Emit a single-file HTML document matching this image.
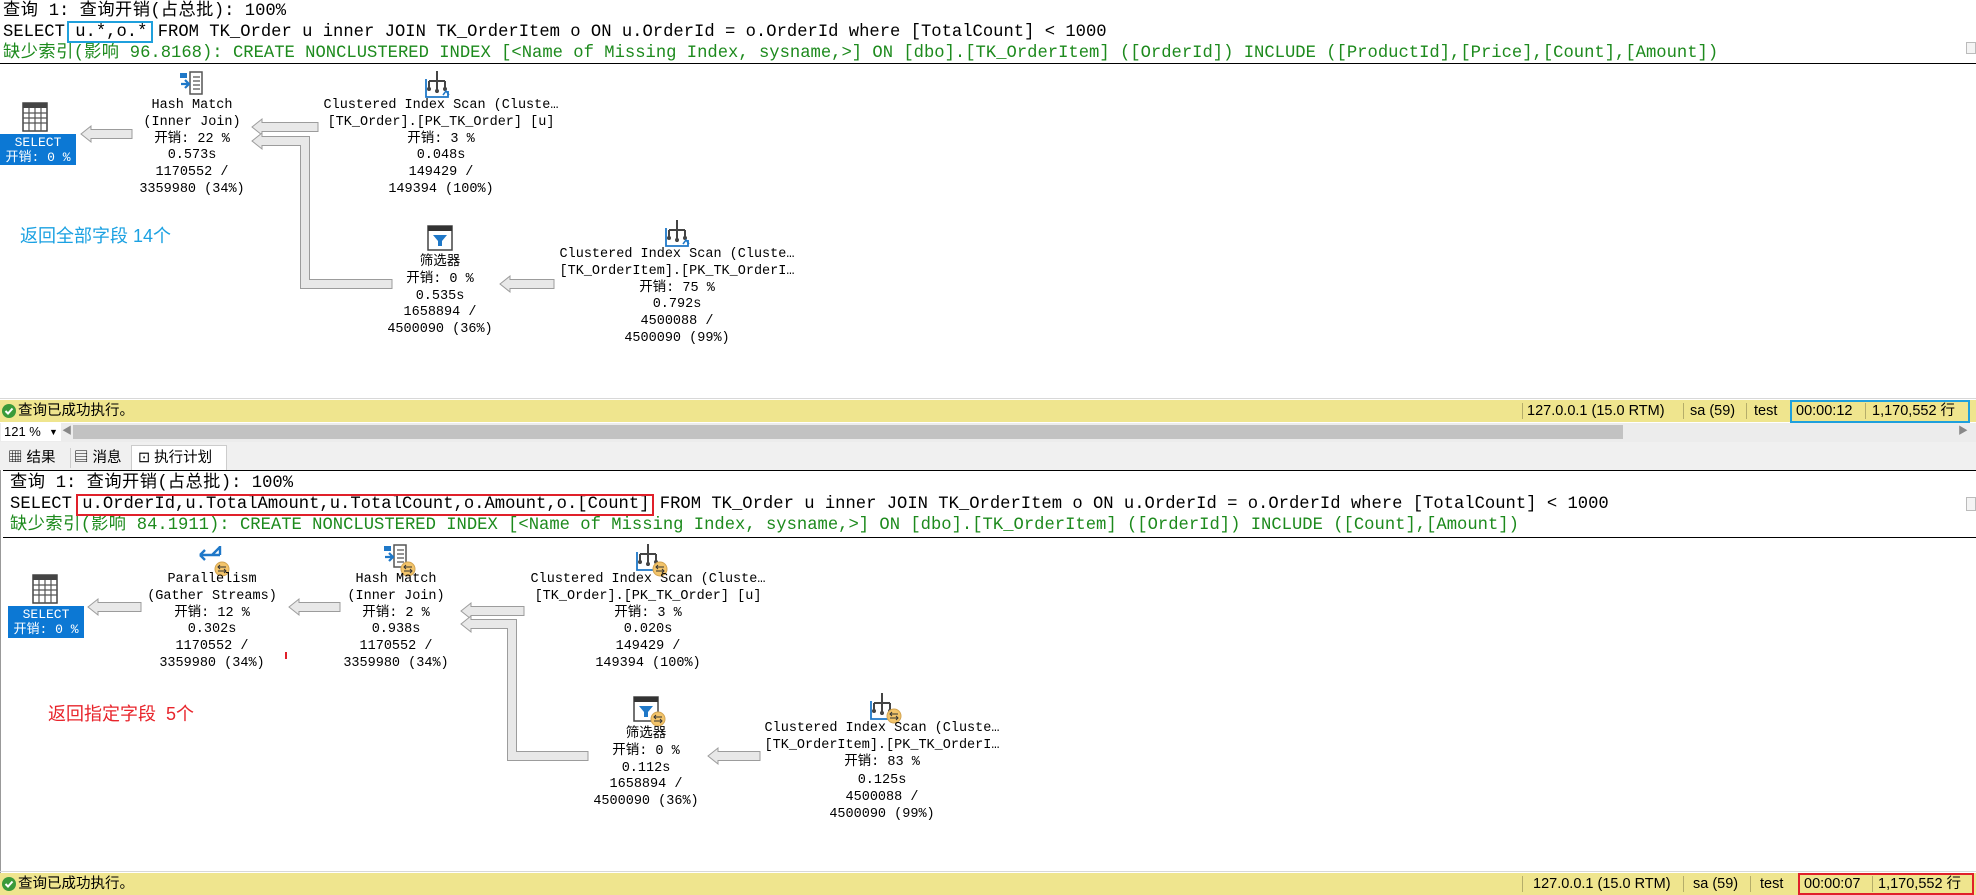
<!DOCTYPE html>
<html><head><meta charset="utf-8"><style>
*{margin:0;padding:0;box-sizing:border-box}
body{width:1976px;height:895px;position:relative;overflow:hidden;background:#fff;font-family:"Liberation Mono","Noto Sans CJK SC",monospace;color:#000}
.a{position:absolute;white-space:pre}
.q{font-size:17.2px;line-height:21px;font-family:"Liberation Mono","Noto Sans CJK SC",monospace}
.c{letter-spacing:0.5px}
.g{color:#1d8a1d}
.n{position:absolute;width:300px;text-align:center;font-size:13.5px;line-height:16.8px;white-space:pre;font-family:"Liberation Mono","Noto Sans CJK SC",monospace}
.sel{position:absolute;background:#0c78d4;color:#fff;text-align:center;font-size:13px;line-height:15px;padding-top:1px}
.sb{position:absolute;left:0;width:1976px;height:22px;background:#efe58e;font-family:"Liberation Sans","Noto Sans CJK SC",sans-serif;font-size:14.5px;line-height:22px}
.sb span{position:absolute;top:0}
.sep{position:absolute;top:3px;width:1px;height:16px;background:#b5ad6a}
.sans{font-family:"Liberation Sans","Noto Sans CJK SC",sans-serif}
</style></head><body>

<div class="a q" style="left:3px;top:1px"><span class="c">查询</span> 1: <span class="c">查询开销</span>(<span class="c">占总批</span>): 100%
SELECT u.*,o.* FROM TK_Order u inner JOIN TK_OrderItem o ON u.OrderId = o.OrderId where [TotalCount] &lt; 1000
<span class="g"><span class="c">缺少索引</span>(<span class="c">影响</span> 96.8168): CREATE NONCLUSTERED INDEX [&lt;Name of Missing Index, sysname,&gt;] ON [dbo].[TK_OrderItem] ([OrderId]) INCLUDE ([ProductId],[Price],[Count],[Amount])</span></div>
<div class="a" style="left:67px;top:21px;width:86px;height:22px;border:2px solid #1fa0dc"></div>
<div class="a" style="left:0;top:63px;width:1976px;height:1px;background:#000"></div>
<div class="a" style="left:1966px;top:42px;width:10px;height:12px;border:1px solid #bbb;background:#f4f4f4"></div>

<svg class="a" style="left:0;top:0" width="1976" height="895">
<defs>
<g id="grid"><rect x="0" y="0" width="24" height="28" fill="#fff" stroke="#444" stroke-width="1.5"/><rect x="0" y="0" width="24" height="5" fill="#444"/><path d="M0 10H24M0 15H24M0 20H24M6 5V28M12 5V28M18 5V28" stroke="#555" stroke-width="1.2"/></g>
<g id="hash"><rect x="10" y="1" width="12" height="22" fill="#fff" stroke="#555" stroke-width="1.5"/><path d="M13 6H20M13 10H20M13 14H20M13 18H20" stroke="#555" stroke-width="1.2"/><rect x="0" y="2" width="7" height="5" fill="#1f78c8"/><path d="M1 13H9M5 9L9 13L5 17" stroke="#1f78c8" stroke-width="2.2" fill="none"/></g>
<g id="cis"><path d="M12 0V22M4 10V17M20 10V17M4 10H20" stroke="#444" stroke-width="2" fill="none"/><circle cx="4" cy="18" r="2" fill="#444"/><circle cx="12" cy="20" r="2" fill="#444"/><circle cx="20" cy="18" r="2" fill="#444"/><path d="M1 8V26H23V20" stroke="#1f78c8" stroke-width="1.8" fill="none"/><path d="M18 24L21 20L24 24" stroke="#1f78c8" stroke-width="1.5" fill="none"/></g>
<g id="filt"><rect x="0" y="0" width="24" height="24" fill="#fff" stroke="#444" stroke-width="1.5"/><rect x="0" y="0" width="24" height="5" fill="#333"/><path d="M5 9H19L14 15V20H10V15Z" fill="#1f78c8"/></g>
<g id="par"><path d="M2 11H22M2 11L7 6M2 11L7 16M22 11V2M14 11L22 3" stroke="#1f78c8" stroke-width="2.4" fill="none"/></g>
<g id="bdg"><circle cx="0" cy="0" r="7" fill="#f3c46a" stroke="#d2a452"/><path d="M-4 -2H4M-4 2H4M-2 -4L-4 -2L-2 0M2 0L4 2L2 4" stroke="#333" stroke-width="1" fill="none"/></g>
</defs>
<g fill="#e8e8e8" stroke="#9c9c9c" stroke-width="1">
<polygon points="81,134 91,126 91,129.5 132,129.5 132,138.5 91,138.5 91,142"/>
<polygon points="252,127 262,119 262,122.5 318,122.5 318,131.5 262,131.5 262,135"/>
<polygon points="252,141 262,133 262,136.5 309.5,136.5 309.5,279.5 392,279.5 392,288.5 300.5,288.5 300.5,145.5 262,145.5 262,149"/>
<polygon points="500,284 510,276 510,279.5 554,279.5 554,288.5 510,288.5 510,292"/>
<polygon points="88,607 98,599 98,602.5 141,602.5 141,611.5 98,611.5 98,615"/>
<polygon points="289,607 299,599 299,602.5 340,602.5 340,611.5 299,611.5 299,615"/>
<polygon points="461,611 471,603 471,606.5 524,606.5 524,615.5 471,615.5 471,619"/>
<polygon points="461,624 471,616 471,619.5 516.5,619.5 516.5,751.5 588,751.5 588,760.5 507.5,760.5 507.5,628.5 471,628.5 471,632"/>
<polygon points="708,756 718,748 718,751.5 760,751.5 760,760.5 718,760.5 718,764"/>
</g>
<use href="#grid" x="23" y="103"/>
<use href="#hash" x="180" y="71"/>
<use href="#cis" x="425" y="71"/>
<use href="#filt" x="428" y="226"/>
<use href="#cis" x="665" y="220"/>
<use href="#grid" x="33" y="575"/>
<use href="#par" x="198" y="544"/><use href="#bdg" x="222" y="569"/>
<use href="#hash" x="384" y="544"/><use href="#bdg" x="408" y="569"/>
<use href="#cis" x="636" y="544"/><use href="#bdg" x="660" y="569"/>
<use href="#filt" x="634" y="697"/><use href="#bdg" x="658" y="719"/>
<use href="#cis" x="870" y="693"/><use href="#bdg" x="894" y="716"/>
<rect x="285" y="652" width="2" height="7" fill="#e0202a"/>
</svg>

<div class="sel" style="left:0;top:134px;width:76px;height:31px">SELECT<br>开销: 0 %</div>
<div class="n" style="left:42px;top:98px">Hash Match
(Inner Join)
开销: 22 %
0.573s
1170552 /
3359980 (34%)</div>
<div class="n" style="left:291px;top:98px">Clustered Index Scan (Cluste…
[TK_Order].[PK_TK_Order] [u]
开销: 3 %
0.048s
149429 /
149394 (100%)</div>
<div class="n" style="left:290px;top:255px">筛选器
开销: 0 %
0.535s
1658894 /
4500090 (36%)</div>
<div class="n" style="left:527px;top:247px">Clustered Index Scan (Cluste…
[TK_OrderItem].[PK_TK_OrderI…
开销: 75 %
0.792s
4500088 /
4500090 (99%)</div>
<div class="a sans" style="left:20px;top:222px;font-size:18px;color:#1ba1e2">返回全部字段 14个</div>
<div class="a" style="left:0;top:398px;width:1976px;height:1px;background:#d8d8d8"></div>

<div class="sb" style="top:400px">
<svg style="position:absolute;left:2px;top:4px" width="14" height="14"><circle cx="7" cy="7" r="7" fill="#3a9a3a"/><path d="M3.5 7L6 9.5L10.5 4.5" stroke="#fff" stroke-width="2" fill="none"/></svg>
<span style="left:18px">查询已成功执行。</span>
<div class="sep" style="left:1522px"></div><span style="left:1527px">127.0.0.1 (15.0 RTM)</span>
<div class="sep" style="left:1683px"></div><span style="left:1690px">sa (59)</span>
<div class="sep" style="left:1746px"></div><span style="left:1754px">test</span>
<div class="sep" style="left:1865px"></div>
<span style="left:1796px">00:00:12</span><span style="left:1872px">1,170,552 行</span>
</div>
<div class="a" style="left:1790px;top:400px;width:180px;height:23px;border:2px solid #1fa0dc"></div>

<div class="a" style="left:0;top:423px;width:1976px;height:19px;background:#ececec"></div>
<div class="a sans" style="left:1px;top:423px;width:60px;height:18px;background:#fff;font-size:13px;line-height:18px;padding-left:3px">121 %</div>
<div class="a sans" style="left:49px;top:423px;font-size:9px;line-height:18px">▼</div>
<div class="a sans" style="left:62px;top:423px;font-size:10px;line-height:18px;color:#888">◀</div>
<div class="a" style="left:73px;top:425px;width:1550px;height:14px;background:#c2c2c2"></div>
<div class="a sans" style="left:1958px;top:423px;font-size:10px;line-height:18px;color:#888">▶</div>

<div class="a" style="left:0;top:442px;width:1976px;height:28px;background:#f0f0f0"></div>
<div class="a sans" style="left:8px;top:448px;font-size:14.5px;line-height:20px">▦ 结果</div>
<div class="a" style="left:70px;top:448px;width:1px;height:20px;background:#ccc"></div>
<div class="a sans" style="left:74px;top:448px;font-size:14.5px;line-height:20px">▤ 消息</div>
<div class="a sans" style="left:131px;top:445px;width:96px;height:26px;background:#fff;border:1px solid #ccc;border-bottom:none;font-size:14.5px;line-height:24px;padding-left:6px">⊡ 执行计划</div>

<div class="a" style="left:3px;top:470px;width:1973px;height:1px;background:#000"></div>
<div class="a" style="left:0;top:470px;width:1px;height:404px;background:#999"></div>
<div class="a q" style="left:10px;top:473px"><span class="c">查询</span> 1: <span class="c">查询开销</span>(<span class="c">占总批</span>): 100%
SELECT u.OrderId,u.TotalAmount,u.TotalCount,o.Amount,o.[Count] FROM TK_Order u inner JOIN TK_OrderItem o ON u.OrderId = o.OrderId where [TotalCount] &lt; 1000
<span class="g"><span class="c">缺少索引</span>(<span class="c">影响</span> 84.1911): CREATE NONCLUSTERED INDEX [&lt;Name of Missing Index, sysname,&gt;] ON [dbo].[TK_OrderItem] ([OrderId]) INCLUDE ([Count],[Amount])</span></div>
<div class="a" style="left:76px;top:494px;width:578px;height:22px;border:2px solid #e0202a"></div>
<div class="a" style="left:3px;top:537px;width:1973px;height:1px;background:#000"></div>
<div class="a" style="left:1966px;top:497px;width:10px;height:14px;border:1px solid #bbb;background:#f4f4f4"></div>

<div class="sel" style="left:8px;top:606px;width:76px;height:32px">SELECT<br>开销: 0 %</div>
<div class="n" style="left:62px;top:572px">Parallelism
(Gather Streams)
开销: 12 %
0.302s
1170552 /
3359980 (34%)</div>
<div class="n" style="left:246px;top:572px">Hash Match
(Inner Join)
开销: 2 %
0.938s
1170552 /
3359980 (34%)</div>
<div class="n" style="left:498px;top:572px">Clustered Index Scan (Cluste…
[TK_Order].[PK_TK_Order] [u]
开销: 3 %
0.020s
149429 /
149394 (100%)</div>
<div class="n" style="left:496px;top:727px">筛选器
开销: 0 %
0.112s
1658894 /
4500090 (36%)</div>
<div class="n" style="left:732px;top:720px;line-height:17.2px">Clustered Index Scan (Cluste…
[TK_OrderItem].[PK_TK_OrderI…
开销: 83 %
0.125s
4500088 /
4500090 (99%)</div>
<div class="a sans" style="left:48px;top:700px;font-size:18px;color:#e8242b">返回指定字段  5个</div>
<div class="a" style="left:0;top:871px;width:1976px;height:1px;background:#d8d8d8"></div>

<div class="sb" style="top:873px">
<svg style="position:absolute;left:2px;top:4px" width="14" height="14"><circle cx="7" cy="7" r="7" fill="#3a9a3a"/><path d="M3.5 7L6 9.5L10.5 4.5" stroke="#fff" stroke-width="2" fill="none"/></svg>
<span style="left:18px">查询已成功执行。</span>
<div class="sep" style="left:1522px"></div><span style="left:1533px">127.0.0.1 (15.0 RTM)</span>
<div class="sep" style="left:1683px"></div><span style="left:1693px">sa (59)</span>
<div class="sep" style="left:1750px"></div><span style="left:1760px">test</span>
<div class="sep" style="left:1872px"></div>
<span style="left:1804px">00:00:07</span><span style="left:1878px">1,170,552 行</span>
</div>
<div class="a" style="left:1798px;top:873px;width:176px;height:22px;border:2px solid #e0202a"></div>
</body></html>
